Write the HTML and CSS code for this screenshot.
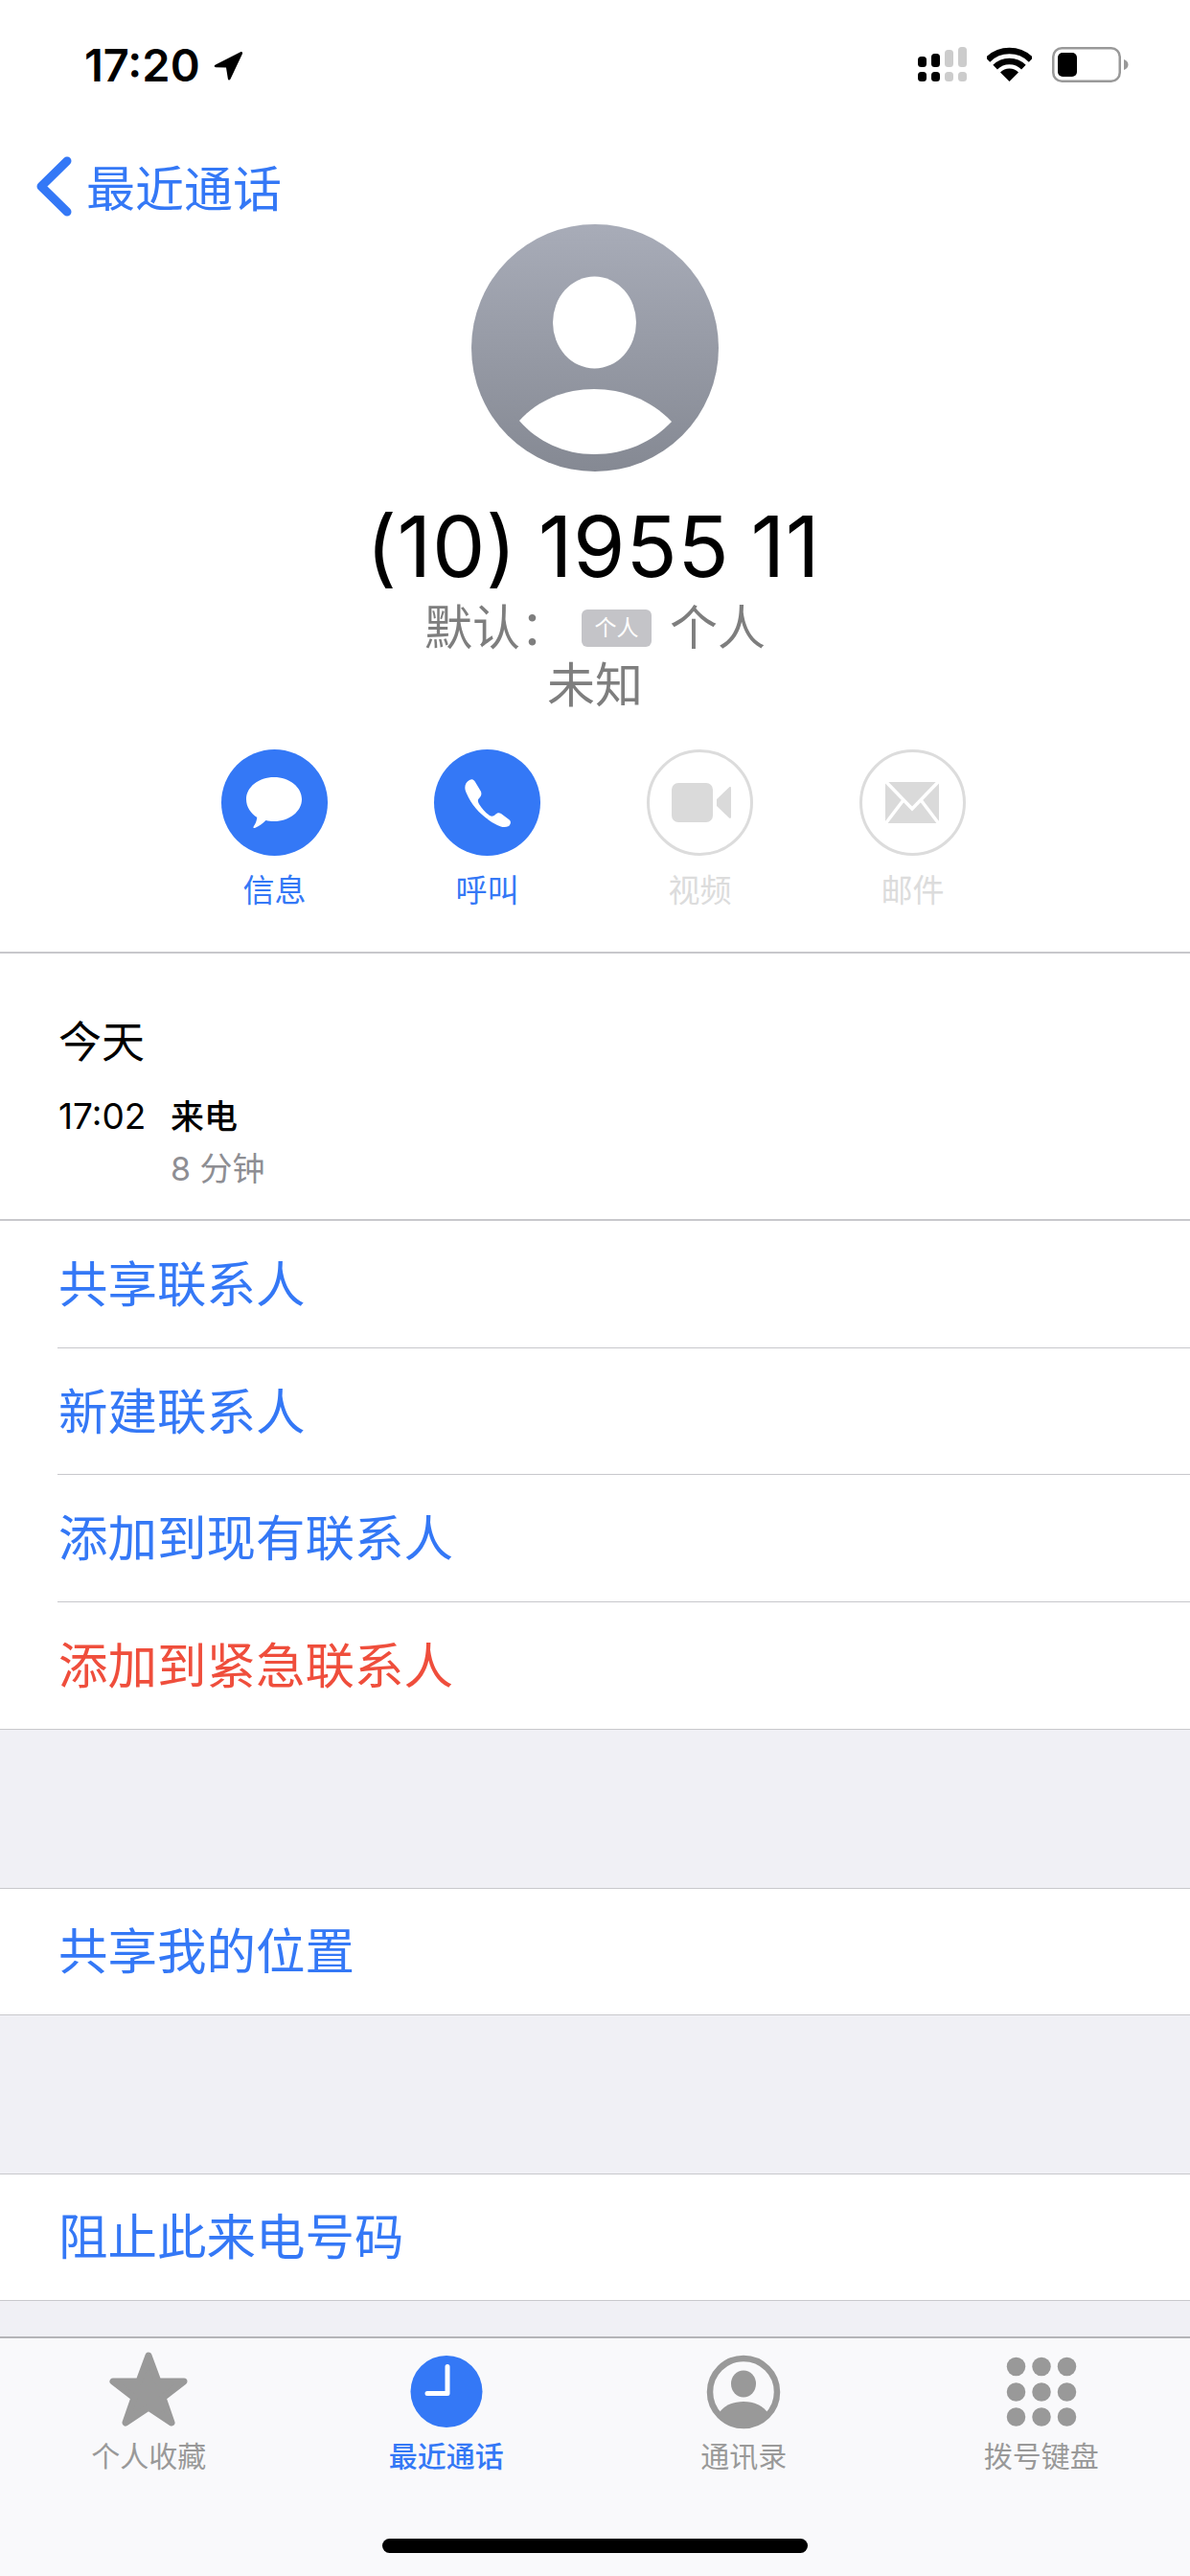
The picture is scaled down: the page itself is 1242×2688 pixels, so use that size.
FILE: index.html
```html
<!DOCTYPE html>
<html lang="zh">
<head>
    <title>最近通话</title>
    <meta name="viewport" content="width=device-width, initial-scale=1">
    <link rel="stylesheet" href="styles.css">
</head>
<body>
<div class="screen">

    <div class="status">
        <div class="status-left">
            <span class="clock-text">17:20</span>
            <svg class="loc" viewBox="0 0 31 31"><path d="M2 14.5 28 1.2c1.400-.6 2.500.4 2 1.800L17.500 29.500c-.6 1.500-2.300 1.400-2.600-.2L13 17.500 2.200 17.200C.2 17 .2 15.400 2 14.500Z"/></svg>
        </div>
        <div class="status-right">
            <svg class="signal" viewBox="0 0 51 36">
                <rect x="0" y="10" width="9" height="11" rx="3.500"/>
                <rect x="14" y="7" width="9" height="14" rx="3.500"/>
                <rect class="off" x="28" y="3" width="9" height="18" rx="3.500"/>
                <rect class="off" x="42" y="0" width="9" height="21" rx="3.500"/>
                <rect x="0" y="26" width="9" height="10" rx="3.500"/>
                <rect x="14" y="26" width="9" height="10" rx="3.500"/>
                <rect class="off" x="28" y="26" width="9" height="10" rx="3.500"/>
                <rect class="off" x="42" y="26" width="9" height="10" rx="3.500"/>
            </svg>
            <svg class="wifi" viewBox="0 0 47 36">
                <path class="wave" d="M.9 13.400A32 32 0 0 1 46.100 13.400"/>
                <path class="wave" d="M8.650 21.150A21 21 0 0 1 38.350 21.150"/>
                <path d="M23.500 36 14 26.500A13.400 13.400 0 0 1 33 26.500Z"/>
            </svg>
            <svg class="battery" viewBox="0 0 80 37">
                <rect class="shell" x="1.250" y="1.250" width="69.500" height="34.500" rx="9"/>
                <rect x="6" y="6" width="20" height="25" rx="5"/>
                <path class="cap" d="M75 13c3 1 4.500 3 4.500 5.500S78 23 75 24Z"/>
            </svg>
        </div>
    </div>

    <div class="nav">
        <svg class="chevron" viewBox="0 0 37 63"><path d="M32 5 5 31.500 32 58"/></svg>
        <span class="back-label">最近通话</span>
    </div>

    <div class="profile">
        <svg class="avatar" viewBox="0 0 258 258">
            <defs>
                <linearGradient id="avatarFill" x1="0" y1="0" x2="0" y2="1">
                    <stop offset="0" stop-color="#a8acb8"/>
                    <stop offset="1" stop-color="#858993"/>
                </linearGradient>
            </defs>
            <circle cx="129" cy="129" r="129" fill="url(#avatarFill)"/>
            <ellipse cx="128.500" cy="102.500" rx="43.500" ry="48" fill="#fff"/>
            <path fill="#fff" d="M50 205C70 183 98 172 128 172s59 11 81 34c-20 21-48 34-81 34-31 0-59-13-78-35Z"/>
        </svg>
        <div class="number">(10) 1955 11</div>
        <div class="meta">
            <span>默认：</span>
            <span class="badge">个人</span>
            <span>个人</span>
        </div>
        <div class="meta">未知</div>
    </div>

    <div class="actions">
        <div class="action on">
            <div class="action-circle">
                <svg viewBox="0 0 111 111"><path d="M55 29c16 0 29 10.300 29 23s-13 23-29 23c-3 0-6-.4-8.500-1-3.500 3.500-7.500 6.500-11.500 8-1.500.5-2-.6-1.200-1.700 1.800-2.600 3-5.300 3.500-9.300C30.500 66.500 26 59.800 26 52c0-12.700 13-23 29-23Z"/></svg>
            </div>
            <span>信息</span>
        </div>
        <div class="action on">
            <div class="action-circle">
                <svg viewBox="0 0 111 111"><path d="M37 32c3-2 5 0 6 2l6 10c1 3 0 5-2 7s-1 4 0 6c3 5 7 9 11 12 2 1 4 1 6-1s4-2 6-1l8 6c3 2 2 5 0 7-4 2-8 1-12-1C52 72 40 60 34 46c-3-6-2-11 3-14Z"/></svg>
            </div>
            <span>呼叫</span>
        </div>
        <div class="action off">
            <div class="action-circle">
                <svg viewBox="0 0 111 111"><rect x="26" y="35" width="43" height="41" rx="7"/><path d="M73 52 86 39.500c1-.8 2-.3 2 1V70.500c0 1.300-1 1.800-2 1L73 59Z"/></svg>
            </div>
            <span>视频</span>
        </div>
        <div class="action off">
            <div class="action-circle">
                <svg viewBox="0 0 111 111">
                    <rect x="27" y="34" width="56" height="43"/>
                    <path class="mail-cut" d="M26 32 55 62 84 32M26 79 45 54M84 79 65 54"/>
                </svg>
            </div>
            <span>邮件</span>
        </div>
    </div>

    <div class="recent">
        <div class="recent-day">今天</div>
        <div class="call">
            <span class="call-time">17:02</span>
            <div>
                <div class="call-type">来电</div>
                <div class="call-length">8 分钟</div>
            </div>
        </div>
    </div>

    <div class="group first">
        <div class="row">共享联系人</div>
        <div class="row">新建联系人</div>
        <div class="row">添加到现有联系人</div>
        <div class="row red">添加到紧急联系人</div>
    </div>

    <div class="group">
        <div class="row single">共享我的位置</div>
    </div>

    <div class="group last">
        <div class="row single">阻止此来电号码</div>
    </div>

    <div class="tabbar">
        <div class="tab">
            <svg viewBox="0 0 82 82"><path class="star" d="M41 4 51 31H78L56 48 65 74 41 58 17 74 26 48 4 31H31Z"/></svg>
            <span>个人收藏</span>
        </div>
        <div class="tab active">
            <svg viewBox="0 0 82 82">
                <circle cx="41" cy="41.500" r="37.500"/>
                <path class="hand" d="M42 15.500V43.500H21"/>
            </svg>
            <span>最近通话</span>
        </div>
        <div class="tab">
            <svg viewBox="0 0 82 82">
                <circle class="ring" cx="41" cy="42" r="35"/>
                <ellipse cx="41" cy="33.500" rx="13" ry="14"/>
                <path d="M15 65C20 56 30 52 41 52s21 4 26 13C60 74 51 80 41 80S22 74 15 65Z"/>
            </svg>
            <span>通讯录</span>
        </div>
        <div class="tab">
            <svg viewBox="0 0 82 82">
                <circle cx="14.500" cy="15.500" r="9.750"/><circle cx="41" cy="15.500" r="9.750"/><circle cx="67.500" cy="15.500" r="9.750"/>
                <circle cx="14.500" cy="42" r="9.750"/><circle cx="41" cy="42" r="9.750"/><circle cx="67.500" cy="42" r="9.750"/>
                <circle cx="14.500" cy="68" r="9.750"/><circle cx="41" cy="68" r="9.750"/><circle cx="67.500" cy="68" r="9.750"/>
            </svg>
            <span>拨号键盘</span>
        </div>
        <div class="home-bar"></div>
    </div>

</div>
</body>
</html>
```

FILE: styles.css
```css
body {
  margin: 0;
  font-family: "Inter", "Noto Sans CJK SC", sans-serif;
  background-color: #fff;
}

.screen {
  width: 1242px;
  height: 2688px;
  overflow: hidden;
  display: flex;
  flex-direction: column;
  background-color: #f0f0f5;
}

/* status bar */
.status {
  height: 150px;
  box-sizing: border-box;
  padding: 44px 64px 0 88px;
  display: flex;
  justify-content: space-between;
  align-items: flex-start;
  background-color: #fff;
}

.status-left {
  display: flex;
  align-items: center;
  gap: 14px;
}

.clock-text {
  font-size: 47px;
  line-height: 48px;
  font-weight: 600;
}

.loc {
  width: 31px;
  height: 31px;
}

.status-right {
  display: flex;
  align-items: flex-start;
  padding-top: 4px;
}

.signal {
  width: 51px;
  height: 36px;
  margin: 1px 21px 0 0;
}

.signal .off {
  fill: #cccccc;
}

.wifi {
  width: 47px;
  height: 36px;
  margin: 1px 21px 0 0;
}

.wifi .wave {
  fill: none;
  stroke: #000;
  stroke-width: 6.500px;
}

.battery {
  width: 80px;
  height: 37px;
  margin-top: 1px;
}

.battery .shell {
  fill: none;
  stroke: #999;
  stroke-width: 2.500px;
}

.battery .cap {
  fill: #999;
}

/* back row */
.nav {
  height: 84px;
  box-sizing: border-box;
  padding: 13px 0 0 38px;
  display: flex;
  align-items: flex-start;
  background-color: #fff;
  color: #3478f6;
}

.chevron {
  width: 37px;
  height: 63px;
  margin-right: 15px;
  flex: none;
}

.chevron path {
  fill: none;
  stroke: #3478f6;
  stroke-width: 9px;
  stroke-linecap: round;
  stroke-linejoin: round;
}

.back-label {
  padding-top: 3px;
  font-size: 51px;
  line-height: 63px;
}

/* contact header */
.profile {
  display: flex;
  flex-direction: column;
  align-items: center;
  background-color: #fff;
}

.avatar {
  width: 258px;
  height: 258px;
}

.number {
  margin: 28px 4px 5px 0;
  font-size: 88px;
  line-height: 100px;
  letter-spacing: 0.5px;
  word-spacing: -3px;
  color: #000;
}

.meta {
  height: 60px;
  display: flex;
  align-items: center;
  font-size: 50px;
  line-height: 60px;
  color: #7e7e7e;
}

.badge {
  width: 73px;
  height: 39px;
  margin: 0 19px 0 14px;
  border-radius: 6px;
  background-color: #c4c4c8;
  color: #fff;
  font-size: 23px;
  line-height: 39px;
  text-align: center;
}

/* round buttons */
.actions {
  padding: 37px 3px 44px 0;
  display: flex;
  justify-content: center;
  gap: 111px;
  background-color: #fff;
}

.action {
  width: 111px;
  display: flex;
  flex-direction: column;
  align-items: center;
  gap: 16px;
  font-size: 33px;
  line-height: 40px;
}

.action-circle {
  width: 111px;
  height: 111px;
  box-sizing: border-box;
  border-radius: 50%;
}

.action-circle svg {
  display: block;
  width: 100%;
  height: 100%;
}

.action.on {
  color: #3478f6;
}

.action.on .action-circle {
  background-color: #3478f6;
}

.action.on svg {
  fill: #fff;
}

.action.off {
  color: #dcdcdc;
}

.action.off .action-circle {
  border: 3px solid #dcdcdc;
}

.action.off svg {
  fill: #dadada;
  margin: -3px;
  width: 111px;
  height: 111px;
}

.mail-cut {
  fill: none;
  stroke: #fff;
  stroke-width: 3.500px;
}

/* call history */
.recent {
  height: 279px;
  box-sizing: border-box;
  padding: 68px 0 0 61px;
  border-top: 2px solid #c8c8cc;
  background-color: #fff;
}

.recent-day {
  font-size: 45px;
  line-height: 50px;
  color: #000;
}

.call {
  margin-top: 30px;
  display: flex;
  align-items: flex-start;
}

.call-time {
  width: 117px;
  font-size: 37px;
  line-height: 44px;
  color: #000;
}

.call-type {
  font-size: 35px;
  line-height: 44px;
  font-weight: 500;
  color: #000;
}

.call-length {
  margin-top: 11px;
  font-size: 34px;
  line-height: 44px;
  color: #8e8e93;
}

/* action rows */
.group {
  margin-bottom: 165px;
  padding-left: 60px;
  border-top: 1px solid #c8c8cc;
  border-bottom: 1px solid #c8c8cc;
  background-color: #fff;
}

.group.first {
  border-top-width: 2px;
}

.group.last {
  margin-bottom: 37px;
}

.row {
  height: 132.500px;
  box-sizing: border-box;
  font-size: 51.500px;
  line-height: 132px;
  color: #3478f6;
  padding-left: 1px;
  border-bottom: 1px solid #c8c8cc;
}

.row:last-child {
  border-bottom: none;
}

.row.single {
  height: 131px;
  line-height: 131px;
}

.row.red {
  color: #ef4e3c;
}

/* tab bar */
.tabbar {
  position: relative;
  flex: 1;
  display: grid;
  grid-template-columns: repeat(4, 1fr);
  padding-top: 14px;
  border-top: 2px solid #b4b4b8;
  background-color: #f9f9fb;
}

.tab {
  display: flex;
  flex-direction: column;
  align-items: center;
  gap: 10px;
  font-size: 30px;
  line-height: 34px;
  color: #999;
}

.tab svg {
  width: 82px;
  height: 82px;
  fill: #999;
}

.tab .star {
  stroke: #999;
  stroke-width: 7px;
  stroke-linejoin: round;
}

.tab .ring {
  fill: none;
  stroke: #999;
  stroke-width: 6.500px;
}

.tab.active {
  color: #3478f6;
  font-weight: 500;
}

.tab.active svg {
  fill: #3478f6;
}

.tab .hand {
  fill: none;
  stroke: #fff;
  stroke-width: 5px;
  stroke-linecap: round;
  stroke-linejoin: round;
}

.home-bar {
  position: absolute;
  left: 399px;
  bottom: 24px;
  width: 444px;
  height: 15px;
  border-radius: 8px;
  background-color: #000;
}
```
